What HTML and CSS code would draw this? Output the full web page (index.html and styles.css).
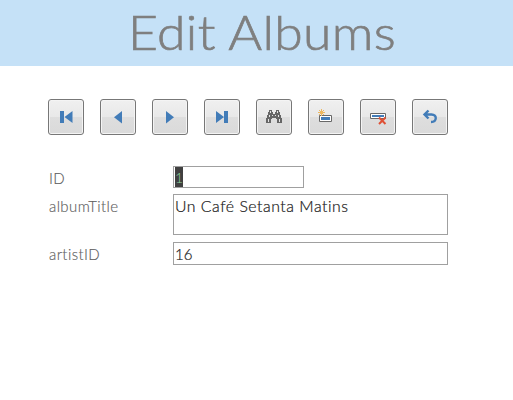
FILE: index.html
```html
<!DOCTYPE html>
<html lang="en">
<head>
<meta charset="utf-8">
<title>Edit Albums</title>
<link rel="stylesheet" href="styles.css">
</head>
<body>
<header class="header"><h1 class="title">Edit Albums</h1></header>
<main class="main">
<nav class="toolbar">
<button class="btn" aria-label="First record"><svg viewBox="0 0 34 34"><path class="blue" d="M11 11h4v12h-4zM23.500 11v12l-8-6z"/></svg></button>
<button class="btn" aria-label="Previous record"><svg viewBox="0 0 34 34"><path class="blue" d="M21 11v12.500l-8-6.250z"/></svg></button>
<button class="btn" aria-label="Next record"><svg viewBox="0 0 34 34"><path class="blue" d="M13 11v12.500l8-6.250z"/></svg></button>
<button class="btn" aria-label="Last record"><svg viewBox="0 0 34 34"><path class="blue" d="M11 11v12l8-6zM19 11h4v12h-4z"/></svg></button>
<button class="btn" aria-label="Find record"><svg viewBox="0 0 34 34"><path class="gray" d="M12 10h3v2h1v2h2v-2h1v-2h3v2h1v3h1v3h1v5h-5v-4h-1v-1h-4v1h-1v4H9v-5h1v-3h1v-3h1z"/><path class="pale" d="M13 11h1v2h-1zM20 11h1v2h-1zM12 15h1v2h-1zM21 15h1v2h-1zM11 19h1v3h-1zM22 19h1v3h-1zM15 15h1v1h-1zM18 15h1v1h-1z"/></svg></button>
<button class="btn" aria-label="Add record"><svg viewBox="0 0 34 34"><path class="frame" d="M10.500 15.500h12v6h-12z"/><path class="blue" d="M12 17h9v3h-9z"/><path class="spark" d="M12.500 9v7M9 12.500h7M10 10l5 5M15 10l-5 5"/></svg></button>
<button class="btn" aria-label="Delete record"><svg viewBox="0 0 34 34"><path class="frame" d="M9.500 13.500h15v5h-15z"/><path class="blue" d="M11 15h12v2h-12z"/><path class="cross" d="M18 17.500l6.500 6.500M24.500 17.500l-6.500 6.500"/></svg></button>
<button class="btn" aria-label="Undo"><svg viewBox="0 0 34 34"><path class="undo" d="M15.500 10.500l-4 4 4 4M12 14.500h6.500c6 0 5.500 7.500 -.5 7.500"/></svg></button>
</nav>
<form class="form">
<div class="row row-id"><span class="label">ID</span><div class="field"><mark class="selected">1</mark></div></div>
<div class="row row-name"><span class="label">albumTitle</span><div class="field"><span class="wide">Un Café Setanta Matins</span></div></div>
<div class="row row-artist"><span class="label">artistID</span><div class="field">16</div></div>
</form>
</main>
</body>
</html>
```
FILE: styles.css
```css
* { box-sizing: border-box; }
body { margin: 0; background: #fff; font-family: "Century Gothic", Lato, sans-serif; font-variant-ligatures: none; }
.header { height: 66px; padding-left: 128px; background: #c5e1f7; }
.title { display: inline-block; margin: 0; font-size: 47px; line-height: 64px; font-weight: 300; letter-spacing: .3px; color: #7f7f7f; white-space: nowrap; transform: scaleX(1.1); transform-origin: left; -webkit-text-stroke: .7px #7f7f7f; }
.main { padding: 33px 0 0 48px; }
.toolbar { display: flex; gap: 16px; }
.btn { width: 36px; height: 36px; padding: 0; border: 1px solid #777; border-radius: 3px; background: linear-gradient(#f0f0f0 0, #e8e8e8 50%, #dedede 51%, #dadada 100%); box-shadow: inset 0 0 0 1px #f4f4f4; }
.btn svg { display: block; width: 34px; height: 34px; }
.blue { fill: #427cb8; }
.gray { fill: #666; }
.pale { fill: #e4e4e4; }
.frame { fill: #fff; stroke: #686868; }
.spark { fill: none; stroke: #edb75f; }
.cross { fill: none; stroke: #df5035; stroke-width: 2; }
.undo { fill: none; stroke: #427cb8; stroke-width: 2.4; }
.form { display: flex; flex-direction: column; margin-top: 31px; font-size: 15px; font-weight: 300; }
.row { display: flex; }
.row-id { height: 22px; }
.row-name { height: 41px; margin-top: 6px; }
.row-artist { height: 23px; margin-top: 7px; }
.label { width: 125px; padding-left: 1px; line-height: 25px; color: #606060; letter-spacing: .4px; -webkit-text-stroke: .15px #606060; }
.field { width: 275px; padding-left: 1px; border: 1px solid #a0a0a0; line-height: 23px; color: #202020; -webkit-text-stroke: .2px #202020; }
.row-id .field { width: 131px; padding-left: 1px; }
.selected { display: block; width: 8px; height: 20px; line-height: 21px; background: #404040; color: #8fd3a0; -webkit-text-stroke: 0; font-size: 14px; }
.wide { display: inline-block; letter-spacing: .5px; transform: scaleX(1.055); transform-origin: left; }
```
